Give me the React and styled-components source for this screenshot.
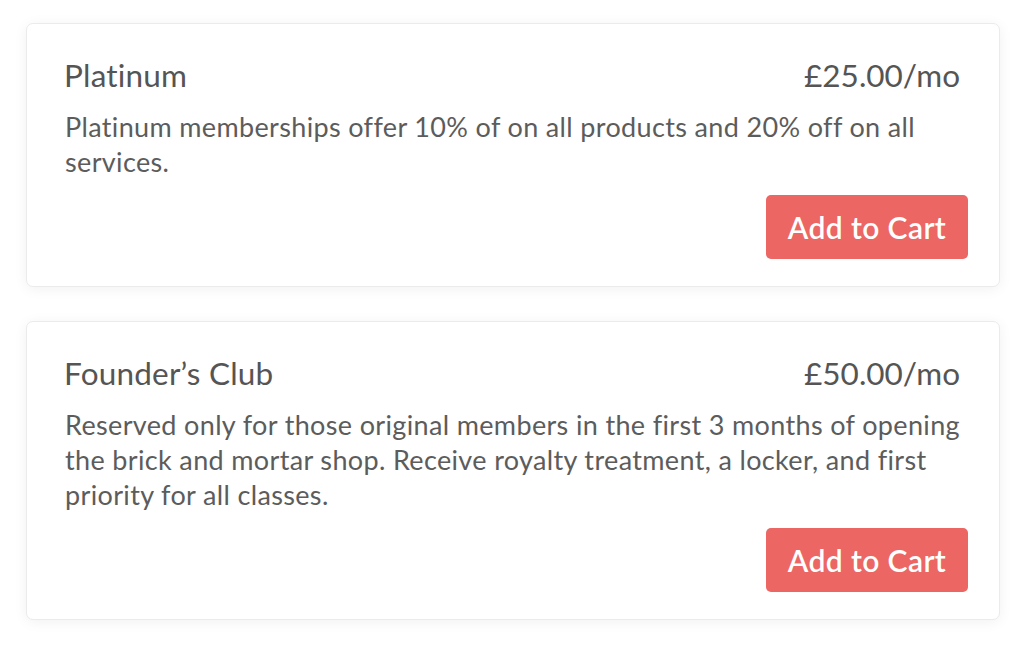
import React from 'react';
import styled, { createGlobalStyle } from 'styled-components';

const GlobalStyle = createGlobalStyle`
  body {
    margin: 0;
    background: #fff;
    font-family: Lato, "Noto Sans", sans-serif;
    font-variant-ligatures: none;
    color: #585858;
  }
`;

const Page = styled.main`
  display: flex;
  flex-direction: column;
  gap: 34px;
  padding: 23px 26px;
`;

const Card = styled.article`
  background: #fff;
  border: 1px solid #ebebeb;
  border-radius: 7px;
  box-shadow: 0 2px 14px 0 rgb(0 0 0 / 6%);
  padding: 31px 31px 27px 37px;
  display: flex;
  flex-direction: column;
`;

const Header = styled.header`
  display: flex;
  justify-content: space-between;
  align-items: baseline;
  padding-right: 8px;
  margin-bottom: 14px;
`;

const Title = styled.h2`
  margin: 0;
  font-size: 31.5px;
  font-weight: 400;
  line-height: 40px;
  letter-spacing: 0.2px;
  color: #555;
`;

const Price = styled.span`
  font-size: 31.5px;
  line-height: 40px;
  color: #555;
`;

const Description = styled.p`
  margin: 0 0 16px 1px;
  font-size: 27px;
  letter-spacing: 0.35px;
  line-height: 35px;
  color: #5c5c5c;
`;

const CartButton = styled.button`
  align-self: flex-end;
  width: 202px;
  height: 64px;
  border: 0;
  border-radius: 5px;
  background: #ec6663;
  color: #fff;
  font: 600 30px/1 Lato, "Noto Sans", sans-serif;
  letter-spacing: 0.4px;
  cursor: pointer;
`;

const plans = [
  {
    name: 'Platinum',
    price: '£25.00/mo',
    text: 'Platinum memberships offer 10% of on all products and 20% off on all services.',
  },
  {
    name: 'Founder’s Club',
    price: '£50.00/mo',
    text: 'Reserved only for those original members in the first 3 months of opening the brick and mortar shop. Receive royalty treatment, a locker, and first priority for all classes.',
  },
];

const App = () => (
  <>
    <GlobalStyle />
    <Page>
      {plans.map((plan) => (
        <Card key={plan.name}>
          <Header>
            <Title>{plan.name}</Title>
            <Price>{plan.price}</Price>
          </Header>
          <Description>{plan.text}</Description>
          <CartButton type="button">Add to Cart</CartButton>
        </Card>
      ))}
    </Page>
  </>
);

export default App;
